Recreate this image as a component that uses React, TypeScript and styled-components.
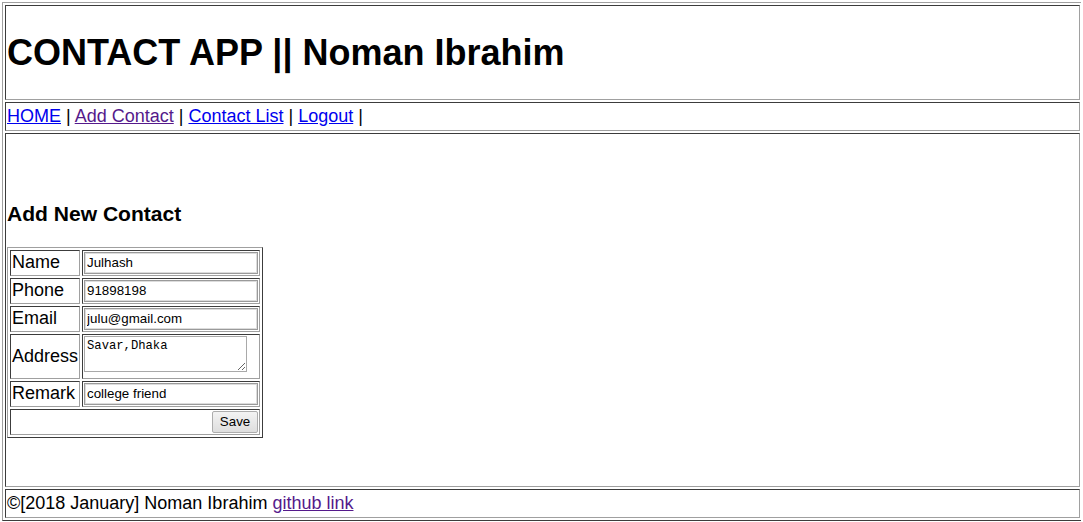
import React from "react";
import styled, { createGlobalStyle } from "styled-components";

const GlobalStyle = createGlobalStyle`
  html, body {
    margin: 0;
    padding: 0;
    background: #ffffff;
  }
  body {
    margin: 2px;
    font-family: "Liberation Sans", Arial, sans-serif;
    font-size: 18px;
    color: #000000;
  }
`;

const LIGHT = "#a0a0a0";
const DARK = "#3c3c3c";

const Frame = styled.table`
  width: 1081px;
  border-collapse: separate;
  border-spacing: 2px;
  border: 1px solid;
  border-color: ${LIGHT} ${DARK} ${DARK} ${LIGHT};
`;

const Cell = styled.td<{ $h: number }>`
  box-sizing: border-box;
  height: ${(p) => p.$h}px;
  padding: 1px;
  vertical-align: middle;
  border: 1px solid;
  border-color: ${DARK} ${LIGHT} ${LIGHT} ${DARK};
`;

const Title = styled.h1`
  margin: 0.67em 0;
  font-size: 36px;
  font-weight: bold;
`;

const Link = styled.a<{ $visited?: boolean }>`
  color: ${(p) => (p.$visited ? "#551a8b" : "#0000ee")};
  text-decoration: underline;
  cursor: pointer;
`;

const Heading = styled.h3`
  margin: 19px 0 21px;
  font-size: 21.06px;
  font-weight: bold;
`;

const FormTable = styled.table`
  border-collapse: separate;
  border-spacing: 2px;
  border: 1px solid;
  border-color: ${LIGHT} ${DARK} ${DARK} ${LIGHT};
`;

const FormCell = styled.td<{ $align?: string }>`
  padding: 1px;
  vertical-align: middle;
  text-align: ${(p) => p.$align || "left"};
  border: 1px solid;
  border-color: ${DARK} ${LIGHT} ${LIGHT} ${DARK};
`;

const TextInput = styled.input`
  display: block;
  box-sizing: border-box;
  width: 174px;
  height: 22px;
  margin: 0;
  padding: 1px 2px;
  border: 1px solid #9a9a9a;
  box-shadow: inset 0 0 0 1px #dcdcdc;
  font-family: "Liberation Sans", Arial, sans-serif;
  font-size: 13.33px;
  color: #000;
  background: #fff;
  outline: none;
`;

const TextArea = styled.textarea`
  display: block;
  box-sizing: border-box;
  width: 163px;
  height: 36px;
  margin: 0 0 5px 0;
  padding: 2px;
  border: 1px solid #a9a9a9;
  font-family: "Liberation Mono", "DejaVu Sans Mono", monospace;
  font-size: 12.2px;
  color: #000;
  background: #fff;
  outline: none;
`;

const SaveButton = styled.button`
  display: block;
  margin-left: auto;
  box-sizing: border-box;
  width: 46px;
  height: 22px;
  padding: 0 6px;
  border: 1px solid #adadad;
  border-radius: 2px;
  background: linear-gradient(#f3f3f3, #dedede);
  font-family: "Liberation Sans", Arial, sans-serif;
  font-size: 13.33px;
  color: #000;
`;

const fields = [
  { label: "Name", value: "Julhash" },
  { label: "Phone", value: "91898198" },
  { label: "Email", value: "julu@gmail.com" },
];

export default function App() {
  return (
    <>
      <GlobalStyle />
      <Frame>
        <tbody>
          <tr>
            <Cell $h={95}>
              <Title>CONTACT APP || Noman Ibrahim</Title>
            </Cell>
          </tr>
          <tr>
            <Cell $h={29}>
              <Link>HOME</Link> | <Link $visited>Add Contact</Link> |{" "}
              <Link>Contact List</Link> | <Link>Logout</Link> |
            </Cell>
          </tr>
          <tr>
            <Cell $h={354}>
              <Heading>Add New Contact</Heading>
              <FormTable>
                <tbody>
                  {fields.map((f) => (
                    <tr key={f.label}>
                      <FormCell>{f.label}</FormCell>
                      <FormCell>
                        <TextInput type="text" defaultValue={f.value} />
                      </FormCell>
                    </tr>
                  ))}
                  <tr>
                    <FormCell>Address</FormCell>
                    <FormCell>
                      <TextArea defaultValue="Savar,Dhaka" />
                    </FormCell>
                  </tr>
                  <tr>
                    <FormCell>Remark</FormCell>
                    <FormCell>
                      <TextInput type="text" defaultValue="college friend" />
                    </FormCell>
                  </tr>
                  <tr>
                    <FormCell colSpan={2} $align="right">
                      <SaveButton type="button">Save</SaveButton>
                    </FormCell>
                  </tr>
                </tbody>
              </FormTable>
            </Cell>
          </tr>
          <tr>
            <Cell $h={29}>
              ©[2018 January] Noman Ibrahim <Link $visited>github link</Link>
            </Cell>
          </tr>
        </tbody>
      </Frame>
    </>
  );
}
